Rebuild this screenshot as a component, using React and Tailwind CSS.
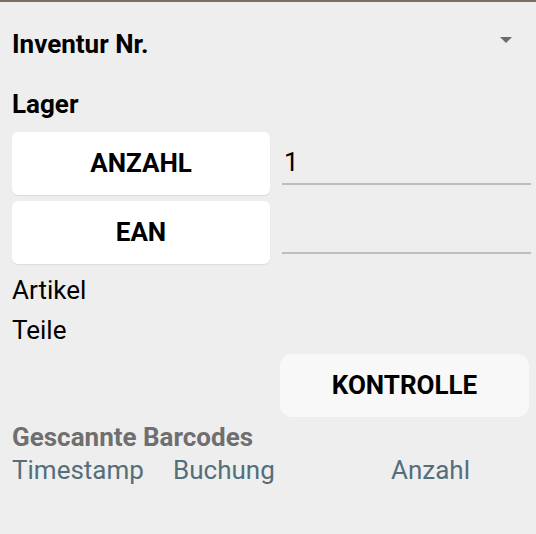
import React from "react";

export default function App() {
  return (
    <div className="w-[536px] h-[534px] bg-[#eeeeee] overflow-hidden relative" style={{ fontFamily: "Roboto, 'Liberation Sans', sans-serif" }}>
      <div className="h-[2px] bg-[#7b6f5d]" />
      <div className="flex items-center justify-between pl-3 pr-[24px] h-[84px]">
        <span className="text-[26px] font-bold text-black leading-none">Inventur Nr.</span>
        <svg width="12" height="6" viewBox="0 0 12 6" className="mb-[8px]"><path d="M0 0H12L6 6Z" fill="#6a6a6a" /></svg>
      </div>
      <div className="pl-3 h-[36px] flex items-center">
        <span className="text-[26px] font-bold text-black leading-none">Lager</span>
      </div>
      <div className="flex flex-col gap-[6px] mt-[10px] pl-3 pr-[5px]">
        <div className="flex items-stretch gap-3">
          <div className="w-[258px] h-[63px] bg-white rounded-[6px] shadow-[0_1px_1px_rgba(0,0,0,0.08)] flex items-center justify-center text-[26px] font-bold text-black">ANZAHL</div>
          <div className="flex-1 flex flex-col justify-end pb-[10px]">
            <span className="text-[26px] text-black leading-none pl-[2px] mb-[8px]">1</span>
            <div className="h-[2px] bg-[#bdbdbd]" />
          </div>
        </div>
        <div className="flex items-stretch gap-3">
          <div className="w-[258px] h-[63px] bg-white rounded-[6px] shadow-[0_1px_1px_rgba(0,0,0,0.08)] flex items-center justify-center text-[26px] font-bold text-black">EAN</div>
          <div className="flex-1 flex flex-col justify-end pb-[10px]">
            <div className="h-[2px] bg-[#bdbdbd]" />
          </div>
        </div>
      </div>
      <div className="pl-3 mt-[6px] text-[26px] text-black leading-[40px]">
        <div>Artikel</div>
        <div>Teile</div>
      </div>
      <div className="flex justify-end pr-[7px] mt-[4px]">
        <div className="w-[249px] h-[63px] bg-[#f8f8f8] rounded-[12px] flex items-center justify-center text-[26px] font-bold text-black">KONTROLLE</div>
      </div>
      <div className="pl-3 mt-[5px] text-[26px] font-bold text-[#6f6f6f] leading-[30px]">Gescannte Barcodes</div>
      <div className="flex pl-3 mt-[2px] text-[26px] text-[#546e7a] leading-[32px]">
        <span className="w-[161px]">Timestamp</span>
        <span className="w-[218px]">Buchung</span>
        <span>Anzahl</span>
      </div>
    </div>
  );
}
